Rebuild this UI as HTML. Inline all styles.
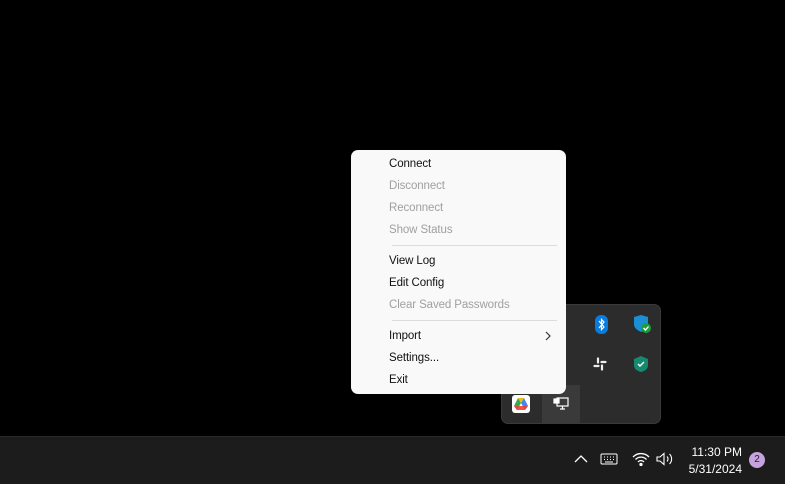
<!DOCTYPE html>
<html><head><meta charset="utf-8"><style>
*{margin:0;padding:0;box-sizing:border-box}
body{width:785px;height:484px;background:#000;position:relative;overflow:hidden;font-family:"Liberation Sans",sans-serif}
.tray{position:absolute;left:501px;top:304px;width:160px;height:120px;background:#2c2c2c;border-radius:7px;border:1px solid #3a3a3a}
.sel{position:absolute;left:542px;top:385px;width:38px;height:38px;background:#3a3a3a}
.menu{position:absolute;left:351px;top:150px;width:215px;height:244px;background:#f9f9f9;border-radius:7px}
.it{position:absolute;left:38px;font-size:11.5px;color:#111;line-height:14px;letter-spacing:-0.1px}
.dis{color:#a0a0a0}
.sep{position:absolute;left:41px;width:165px;height:1px;background:#dcdcdc}
.tb{position:absolute;left:0;top:436px;width:785px;height:48px;background:#1c1c1c;border-top:1px solid #2a2a2a}
.clk{position:absolute;right:43px;top:444px;color:#fff;font-size:12px;text-align:right;line-height:17px}
.badge{position:absolute;left:749px;top:452px;width:16px;height:16px;border-radius:50%;background:#c7a3dd;color:#222;font-size:10px;text-align:center;line-height:16px}
</style></head><body>
<div class="tray"></div>
<div class="sel"></div>
<div style="position:absolute;left:595px;top:315px;width:13px;height:19px;background:#0a7ce0;border-radius:6px"></div>
<svg style="position:absolute;left:595px;top:315px" width="13" height="19" viewBox="0 0 13 19"><path d="M4 6l5 6-2.5 2.5V4.5L9 7 4 13" fill="none" stroke="#fff" stroke-width="1.2"/></svg>
<svg style="position:absolute;left:632px;top:314px" width="20" height="20" viewBox="0 0 20 20"><path d="M2 3l7-2 7 2v7c0 4-3 6-7 8-4-2-7-4-7-8z" fill="#1a8fd6"/><circle cx="14" cy="14" r="5" fill="#1f9d3e"/><path d="M11.5 14l2 2 3-3.5" stroke="#fff" fill="none" stroke-width="1.3"/></svg>
<svg style="position:absolute;left:593px;top:357px" width="14" height="14" viewBox="0 0 14 14" stroke="#eee" stroke-width="2.2" stroke-linecap="round"><path d="M5 1.5v4M9 8.5v4M1.5 9h4M8.5 5h4"/></svg>
<svg style="position:absolute;left:633px;top:355px" width="16" height="18" viewBox="0 0 16 18"><path d="M8 1l7 3v6c0 4-3 6-7 7-4-1-7-3-7-7V4z" fill="#148a6e"/><path d="M5 9l2 2 4-4" stroke="#fff" fill="none" stroke-width="1.4"/></svg>
<div style="position:absolute;left:512px;top:395px;width:18px;height:18px;background:#fff;border-radius:3px"></div>
<svg style="position:absolute;left:513px;top:397px" width="16" height="14" viewBox="0 0 16 14"><path d="M5 1h6l-3 5z" fill="#fbbc04"/><path d="M5 1L1 9l3 4 4-7z" fill="#34a853"/><path d="M11 1l4 8-3 4-4-7z" fill="#4285f4"/><path d="M4 13h8l3-4H1z" fill="#ea4335" opacity=".9"/></svg>
<svg style="position:absolute;left:553px;top:395px" width="16" height="16" viewBox="0 0 16 16" fill="none" stroke="#fff" stroke-width="1.2"><rect x="4" y="3" width="11" height="8"/><path d="M9.5 11v3M7 14h5"/><rect x="1" y="4" width="5" height="4" fill="#fff"/></svg>
<div class="menu">
<div class="it" style="top:7px">Connect</div>
<div class="it dis" style="top:29px">Disconnect</div>
<div class="it dis" style="top:51px">Reconnect</div>
<div class="it dis" style="top:73px">Show Status</div>
<div class="sep" style="top:95px"></div>
<div class="it" style="top:104px">View Log</div>
<div class="it" style="top:126px">Edit Config</div>
<div class="it dis" style="top:148px">Clear Saved Passwords</div>
<div class="sep" style="top:170px"></div>
<div class="it" style="top:179px">Import</div>
<svg style="position:absolute;left:194px;top:181px" width="6" height="10" viewBox="0 0 6 10"><path d="M1 1l4 4-4 4" fill="none" stroke="#333" stroke-width="1.2"/></svg>
<div class="it" style="top:201px">Settings...</div>
<div class="it" style="top:223px">Exit</div>
</div>
<div class="tb"></div>
<svg style="position:absolute;left:574px;top:454px" width="14" height="10" viewBox="0 0 14 10"><path d="M1 8l6-6 6 6" fill="none" stroke="#fff" stroke-width="1.3"/></svg>
<svg style="position:absolute;left:600px;top:453px" width="18" height="12" viewBox="0 0 18 12" fill="none" stroke="#fff" stroke-width="1"><rect x="1" y="1" width="16" height="10" rx="1"/><path d="M4 4h1M7 4h1M10 4h1M13 4h1M4 6.5h1M7 6.5h1M10 6.5h1M13 6.5h1M5 9h8"/></svg>
<svg style="position:absolute;left:632px;top:452px" width="18" height="14" viewBox="0 0 18 14" fill="none" stroke="#fff" stroke-width="1.3"><path d="M1 5a11 11 0 0 1 16 0M3.5 7.5a7.5 7.5 0 0 1 11 0M6 10a4 4 0 0 1 6 0"/><circle cx="9" cy="12.5" r="1" fill="#fff"/></svg>
<svg style="position:absolute;left:656px;top:452px" width="18" height="14" viewBox="0 0 18 14" fill="none" stroke="#fff" stroke-width="1.1"><path d="M1 5h3l4-3.5v11L4 9H1z"/><path d="M11 4.5a3.5 3.5 0 0 1 0 5M13.5 2a7 7 0 0 1 0 10"/></svg>
<div class="clk">11:30 PM<br>5/31/2024</div>
<div class="badge">2</div>
</body></html>
